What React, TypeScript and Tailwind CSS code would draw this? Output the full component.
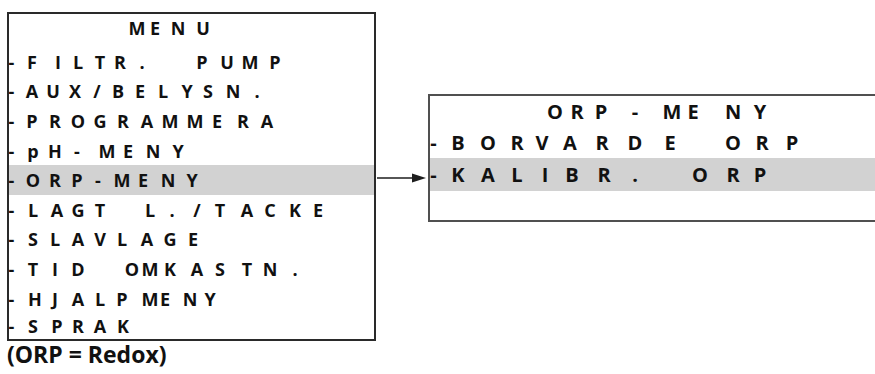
import React from 'react';

type Line = { t: string; x: number[] };

// glyph centres measured on the display (page x)
const menuTitle: Line = { t: 'MENU', x: [137, 155, 178, 203] };

const menuRows: Line[] = [
  { t: '-FILTR.PUMP', x: [11.5, 32, 58, 78, 100, 120, 142, 202, 227, 250, 275] },
  { t: '-AUX/BELYSN.', x: [11.5, 32, 53, 75, 97, 118, 140, 163, 187, 208, 233, 257] },
  { t: '-PROGRAMMERA', x: [11.5, 32, 55, 78, 100, 123, 147, 170, 195, 217, 243, 267] },
  { t: '-pH-MENY', x: [11.5, 33, 55, 77, 107, 128, 153, 178] },
  { t: '-ORP-MENY', x: [11.5, 33, 55, 77, 98, 122, 143, 168, 192] },
  { t: '-LAGTL./TACKE', x: [11.5, 33, 57, 78, 100, 150, 172, 197, 220, 247, 270, 295, 318] },
  { t: '-SLAVLAGE', x: [11.5, 33, 55, 78, 100, 122, 147, 170, 193] },
  { t: '-TIDOMKASTN.', x: [11.5, 33, 55, 78, 132, 150, 170, 197, 220, 247, 270, 295] },
  { t: '-HJALPMENY', x: [11.5, 35, 55, 78, 100, 122, 150, 165, 190, 210] },
  { t: '-SPRAK', x: [11.5, 33, 57, 78, 100, 123] },
];

const orpTitle: Line = { t: 'ORP-MENY', x: [555, 577, 601, 635, 672, 693, 733, 760] };
const orpRows: Line[] = [
  { t: '-BORVARDEORP', x: [433.5, 458, 488, 517, 542, 570, 602, 635, 670, 733, 762, 792] },
  { t: '-KALIBR.ORP', x: [433.5, 458, 488, 517, 545, 572, 604, 635, 700, 733, 760] },
];

const Glyphs = ({ line, origin }: { line: Line; origin: number }) => {
  let prev = origin;
  return (
    <div className="flex items-center h-full">
      {line.t.split('').map((c, i) => {
        const d = line.x[i] - prev;
        prev = line.x[i];
        return (
          <span key={i} className="flex w-0 shrink-0 justify-center" style={{ marginLeft: d }}>
            {c}
          </span>
        );
      })}
    </div>
  );
};

const Arrow = () => (
  <svg width="49" height="12" viewBox="0 0 49 12" className="ml-[1px] mt-[172px] shrink-0">
    <line x1="0" y1="6" x2="38" y2="6" stroke="#1e1e1e" strokeWidth="1.5" />
    <polygon points="35,1.5 49,6 35,10.5" fill="#1e1e1e" />
  </svg>
);

export default function App() {
  return (
    <div className="w-[875px] h-[374px] bg-white overflow-hidden flex font-['Open_Sans',sans-serif] font-bold text-[#111]">
      {/* main menu */}
      <div className="ml-[7px] mt-[12px] shrink-0">
        <div className="w-[369px] border-2 border-[#2a2a2a] text-[18px] leading-none">
          <div className="h-[33px] pb-[5px]">
            <Glyphs line={menuTitle} origin={9} />
          </div>
          {menuRows.map((r, i) => (
            <div
              key={i}
              className={`${i === menuRows.length - 1 ? 'h-[26px]' : 'h-[29.6px]'} ${i === 4 ? 'bg-[#d2d2d2]' : ''}`}
            >
              <Glyphs line={r} origin={9} />
            </div>
          ))}
        </div>
        <div className="mt-[1px] text-[23px] leading-[24px]">(ORP = Redox)</div>
      </div>

      <Arrow />

      {/* ORP submenu */}
      <div className="ml-[2px] mt-[94px] w-[460px] h-[128px] border-2 border-[#505050] text-[20px] leading-none shrink-0">
        <div className="h-[32px]">
          <Glyphs line={orpTitle} origin={430} />
        </div>
        <div className="h-[30px]">
          <Glyphs line={orpRows[0]} origin={430} />
        </div>
        <div className="h-[33px] bg-[#d2d2d2]">
          <Glyphs line={orpRows[1]} origin={430} />
        </div>
      </div>
    </div>
  );
}
